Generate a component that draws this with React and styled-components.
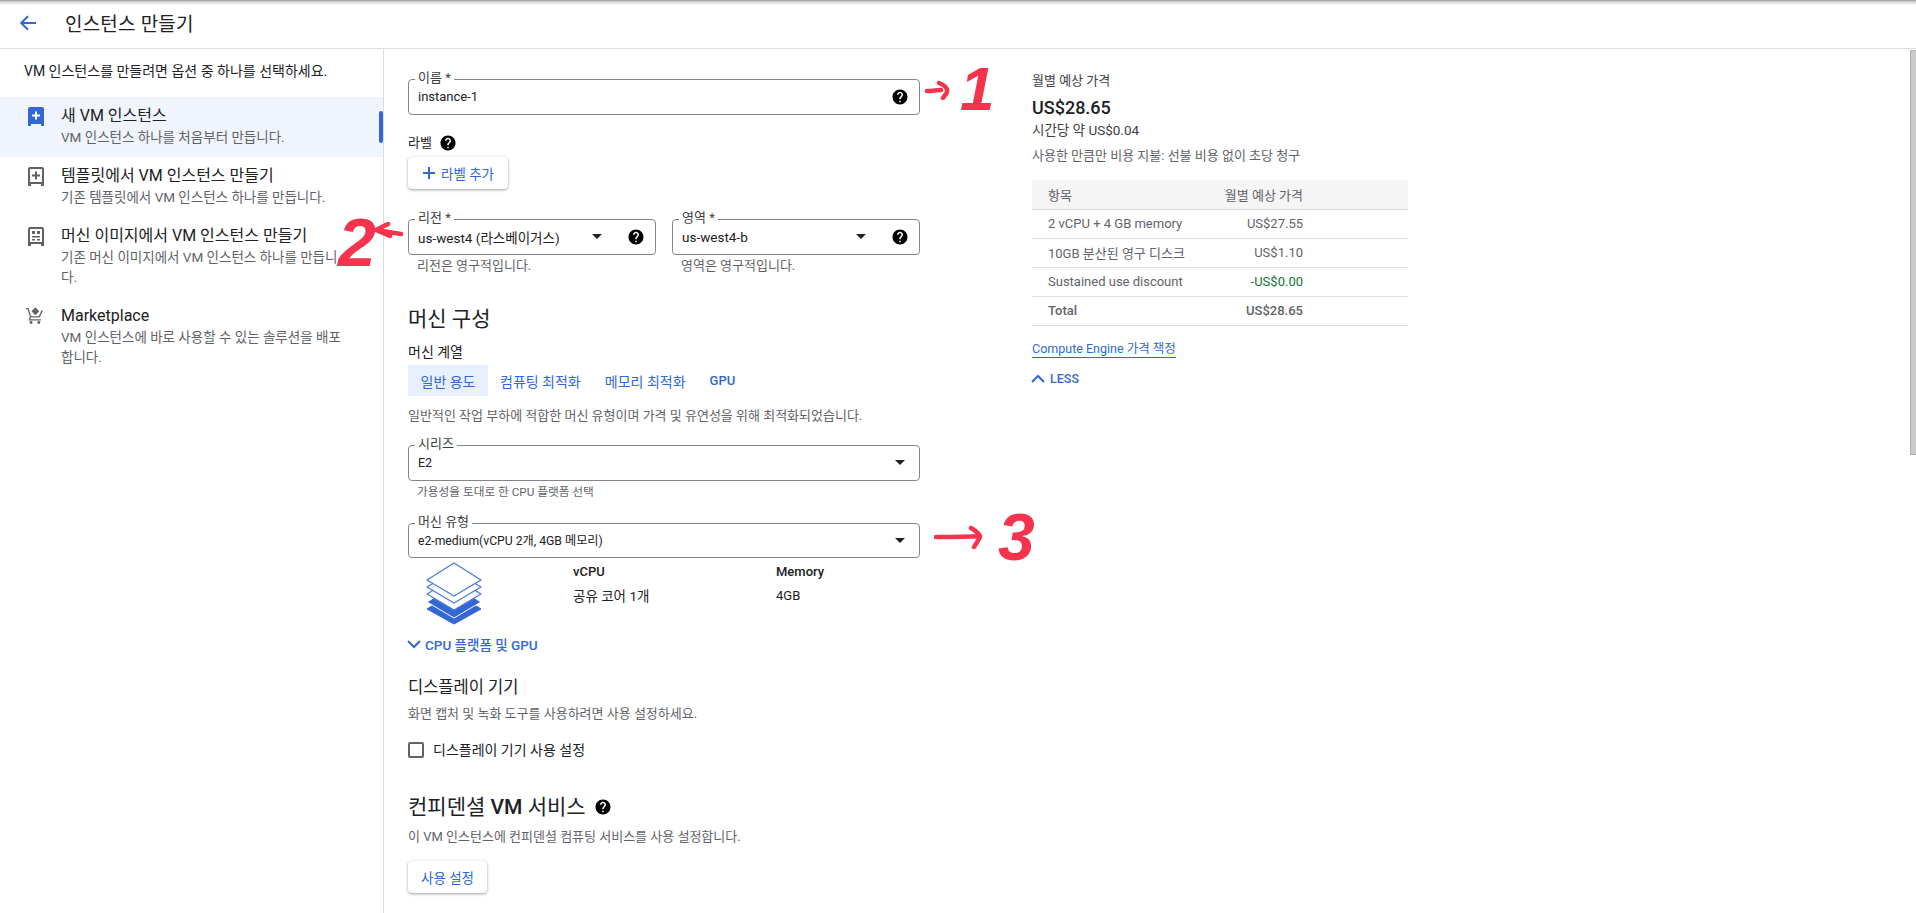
import React from 'react';
import styled, { createGlobalStyle } from 'styled-components';

const FONT = `Roboto, "Noto Sans CJK KR", "Noto Sans", sans-serif`;

const Global = createGlobalStyle`
  html, body { margin: 0; padding: 0; height: 100%; background: #fff; overflow: hidden; }
  body { font-family: ${FONT}; color: #202124; }
  * { box-sizing: border-box; }
`;

const Page = styled.div`
  position: relative;
  width: 1916px;
  height: 913px;
  overflow: hidden;
  display: flex;
  flex-direction: column;
`;
const Header = styled.header`
  height: 49px;
  flex: none;
  display: flex;
  align-items: center;
  padding: 0 0 3px 19px;
  gap: 28px;
  border-bottom: 1px solid #dadce0;
  background: linear-gradient(#9a9a9a 0, #d8d8d8 2px, #fff 5px);
`;
const Title = styled.h1`
  margin: 0;
  font-size: 19px;
  font-weight: 400;
  letter-spacing: 0.2px;
  color: #202124;
`;
const Body = styled.div`
  flex: 1;
  display: flex;
  min-height: 0;
`;
const Sidebar = styled.nav`
  width: 384px;
  flex: none;
  border-right: 1px solid #dadce0;
`;
const SideIntro = styled.p`
  margin: 0;
  height: 48px;
  padding: 12px 0 0 24px;
  font-size: 14px;
  line-height: 20px;
  color: #202124;
`;
const SideItem = styled.div`
  position: relative;
  display: flex;
  padding: 8px 30px 10px 28px;
  gap: 17px;
  background: ${p => (p.$active ? '#f0f4fc' : 'transparent')};
  &::after {
    content: '';
    display: ${p => (p.$active ? 'block' : 'none')};
    position: absolute;
    right: 0;
    top: 14px;
    width: 4px;
    height: 32px;
    border-radius: 2px;
    background: #3367d6;
  }
`;
const SideIcon = styled.span`
  flex: none;
  width: 16px;
  height: 20px;
  margin-top: 2px;
  display: flex;
  justify-content: center;
`;
const SideText = styled.div`
  flex: 1;
  min-width: 0;
`;
const SideTitle = styled.div`
  font-size: 16px;
  line-height: 22px;
  color: #202124;
`;
const SideDesc = styled.div`
  font-size: 13.5px;
  line-height: 20px;
  color: #5f6368;
  word-break: break-all;
`;
const Main = styled.main`
  flex: 1;
  display: flex;
  padding: 30px 0 0 24px;
  gap: 112px;
`;
const Form = styled.div`
  width: 512px;
  flex: none;
`;
const Field = styled.div`
  position: relative;
  flex: 1;
  height: ${p => p.$h || 36}px;
  margin-top: ${p => p.$top || 0}px;
  display: flex;
  align-items: center;
  padding: 0 10px 1px 9px;
  border: 1px solid #80868b;
  border-radius: 4px;
  font-size: ${p => p.$size || 13}px;
  color: #202124;
`;
const FieldLabel = styled.span`
  position: absolute;
  left: 6px;
  top: -10px;
  padding: 0 3px;
  background: #fff;
  font-size: 13px;
  line-height: 16px;
  color: #3c4043;
`;
const FieldValue = styled.span`
  flex: 1;
  white-space: nowrap;
`;
const Arrow = styled.span`
  width: 0;
  height: 0;
  margin-right: ${p => p.$gap || 0}px;
  border-left: 5px solid transparent;
  border-right: 5px solid transparent;
  border-top: 5px solid #202124;
`;
const Caret = styled(Arrow)`
  margin-right: ${p => p.$gap || 4}px;
`;
const Hint = styled.div`
  padding-left: 9px;
  margin-top: ${p => p.$top || 3}px;
  font-size: ${p => p.$size || 13}px;
  line-height: 16px;
  color: #5f6368;
`;
const LabelRow = styled.div`
  margin-top: 19px;
  display: flex;
  align-items: center;
  gap: 7px;
  font-size: 13px;
  line-height: 16px;
  color: #202124;
`;
const RaisedButton = styled.button`
  display: flex;
  align-items: center;
  justify-content: center;
  gap: 5px;
  width: ${p => p.$w}px;
  height: 32px;
  margin-top: ${p => p.$top}px;
  padding: 0;
  border: 0;
  border-radius: 4px;
  background: #fff;
  color: #3367d6;
  font-family: ${FONT};
  font-size: 13.5px;
  box-shadow: 0 1px 2px rgba(60,64,67,.3), 0 1px 3px 1px rgba(60,64,67,.15);
`;
const Row = styled.div`
  display: flex;
  gap: 16px;
  margin-top: ${p => p.$top || 0}px;
`;
const RowCol = styled.div`
  flex: 1;
  min-width: 0;
`;
const H2 = styled.h2`
  display: flex;
  align-items: center;
  gap: 8px;
  margin: ${p => p.$top || 0}px 0 0;
  font-size: 21px;
  line-height: 24px;
  font-weight: 400;
  color: #202124;
`;
const H2Latin = styled.b`
  font-weight: 500;
`;
const H3 = styled.h3`
  margin: ${p => p.$top || 0}px 0 0;
  font-size: 16.5px;
  line-height: 20px;
  font-weight: 400;
  color: #202124;
`;
const Sub = styled.div`
  margin-top: ${p => p.$top || 0}px;
  font-size: ${p => (p.$dark ? 14 : 13)}px;
  line-height: 16px;
  color: ${p => (p.$dark ? '#202124' : '#5f6368')};
`;
const Tabs = styled.div`
  display: flex;
  margin-top: 5px;
  height: 31px;
`;
const Tab = styled.div`
  display: flex;
  align-items: center;
  padding: 0 ${p => (p.$active ? 12.500 : 12)}px;
  font-size: ${p => (p.$bold ? 13 : 14)}px;
  font-weight: ${p => (p.$bold ? 500 : 400)};
  color: #3367d6;
  background: ${p => (p.$active ? '#e8f0fe' : 'transparent')};
`;
const Spec = styled.div`
  display: flex;
  margin-top: 4px;
  height: 66px;
`;
const StackBox = styled.div`
  width: 165px;
  padding-left: 16px;
  flex: none;
`;
const SpecCol = styled.div`
  width: ${p => p.$w}px;
  padding-top: 2px;
  font-size: 13px;
`;
const SpecHead = styled.div`
  font-weight: 500;
  line-height: 16px;
  margin-bottom: 8px;
`;
const SpecVal = styled.div`
  line-height: 16px;
  font-size: ${p => p.$size || 13}px;
`;
const Disclosure = styled.div`
  display: flex;
  align-items: center;
  gap: ${p => p.$gap || 4}px;
  height: ${p => p.$h || 20}px;
  margin-top: ${p => p.$top || 0}px;
  margin-left: ${p => p.$left || 0}px;
  font-size: ${p => p.$size || 12.500}px;
  font-weight: 500;
  color: #3367d6;
`;
const CheckRow = styled.label`
  display: flex;
  align-items: center;
  gap: 9px;
  margin-top: 20px;
  font-size: 14px;
  line-height: 16px;
`;
const Box = styled.span`
  width: 16px;
  height: 16px;
  border: 2px solid #5f6368;
  border-radius: 2px;
`;
const Price = styled.aside`
  width: 376px;
  flex: none;
  margin-top: -6px;
`;
const PriceCaption = styled.div`
  font-size: 13px;
  line-height: 16px;
  color: #3c4043;
`;
const PriceBig = styled.div`
  margin-top: 8px;
  font-size: 18px;
  line-height: 22px;
  font-weight: 500;
`;
const PriceHour = styled.div`
  font-size: 13.500px;
  line-height: 16px;
  color: #3c4043;
  margin-top: 3px;
`;
const PriceNote = styled.div`
  margin-top: 10px;
  font-size: 13px;
  line-height: 16px;
  color: #5f6368;
`;
const Table = styled.table`
  width: 100%;
  margin-top: 16px;
  border-collapse: collapse;
  font-size: 13px;
  color: #5f6368;
`;
const Th = styled.th`
  height: 29px;
  font-weight: 400;
  background: #f5f5f5;
  border-bottom: 1px solid #dadce0;
  text-align: ${p => (p.$num ? 'right' : 'left')};
  padding: ${p => (p.$num ? '0 105px 0 0' : '0 0 0 16px')};
`;
const Td = styled.td`
  height: 29px;
  border-bottom: 1px solid #dadce0;
  font-weight: ${p => (p.$bold ? 500 : 400)};
  color: ${p => p.$color || 'inherit'};
  text-align: ${p => (p.$num ? 'right' : 'left')};
  padding: ${p => (p.$num ? '0 105px 0 0' : '0 0 0 16px')};
`;
const PriceLink = styled.a`
  display: inline-block;
  margin-top: 15px;
  font-size: 12.500px;
  line-height: 16px;
  color: #3367d6;
  border-bottom: 1px solid #3367d6;
`;
const Scroll = styled.div`
  position: absolute;
  top: 50px;
  right: 0;
  width: 6px;
  height: 405px;
  background: #cbcbcb;
  border-left: 1px solid #adadad;
  border-top: 1px solid #b8b8b8;
  border-bottom: 1px solid #adadad;
`;
const Note = styled.div`
  position: absolute;
  left: ${p => p.$x}px;
  top: ${p => p.$y}px;
  pointer-events: none;
`;
const NoteDigit = styled(Note)`
  font-family: "Liberation Sans", sans-serif;
  font-size: ${p => p.$size}px;
  line-height: 1;
  font-style: italic;
  font-weight: 700;
  color: #f5334d;
`;

const HelpIcon = ({ size = 18 }) => (
  <svg width={size} height={size} viewBox="0 0 24 24" fill="#000" style={{ flex: 'none' }}>
    <path d="M12 2C6.48 2 2 6.48 2 12s4.48 10 10 10 10-4.48 10-10S17.52 2 12 2zm1 17h-2v-2h2v2zm2.07-7.75l-.9.92C13.45 12.9 13 13.5 13 15h-2v-.5c0-1.1.45-2.1 1.17-2.83l1.24-1.26c.37-.36.59-.86.59-1.41 0-1.1-.9-2-2-2s-2 .9-2 2H8c0-2.21 1.79-4 4-4s4 1.79 4 4c0 .88-.36 1.68-.93 2.25z" />
  </svg>
);
const BackIcon = () => (
  <svg width="18" height="18" viewBox="0 0 18 18" fill="none" stroke="#3367d6" strokeWidth="2">
    <path d="M17 9H2.5M9 2.2 2.2 9 9 15.8" />
  </svg>
);
const Plus = () => (
  <svg width="14" height="14" viewBox="0 0 14 14" fill="none" stroke="#3367d6" strokeWidth="2">
    <path d="M7 1v12M1 7h12" />
  </svg>
);
const Chevron = ({ up }) => (
  <svg width="16" height="10" viewBox="0 0 16 10" fill="none" stroke="#3367d6" strokeWidth="2">
    <path d={up ? 'M2 8l6-6 6 6' : 'M2 2l6 6 6-6'} />
  </svg>
);
const NewVm = () => (
  <svg width="16" height="19" viewBox="0 0 16 19">
    <path fill="#3367d6" d="M2 0h12a2 2 0 0 1 2 2v17h-3v-2H3v2H0V2a2 2 0 0 1 2-2z" />
    <path stroke="#fff" strokeWidth="2" d="M8 4.5v8M4 8.5h8" />
  </svg>
);
const TemplateVm = () => (
  <svg width="16" height="19" viewBox="0 0 16 19" fill="none">
    <path fill="#5f6368" fillRule="evenodd" d="M2 0h12a2 2 0 0 1 2 2v17h-3v-2H3v2H0V2a2 2 0 0 1 2-2zm0 2v13h12V2z" />
    <path stroke="#5f6368" strokeWidth="2" d="M8 4.5v8M4 8.5h8" />
  </svg>
);
const ImageVm = () => (
  <svg width="16" height="19" viewBox="0 0 16 19" fill="none">
    <path fill="#5f6368" fillRule="evenodd" d="M2 0h12a2 2 0 0 1 2 2v17h-3v-2H3v2H0V2a2 2 0 0 1 2-2zm0 2v13h12V2z" />
    <path fill="#5f6368" d="M4 4h3v3H4zM9 4h3v3H9zM4 9h8v1.500H4zM4 12h3v1.500H4zM9 12h3v1.500H9z" />
  </svg>
);
const Cart = () => (
  <svg width="22" height="22" viewBox="0 0 22 22" fill="none" style={{ marginLeft: -3, marginTop: -2 }}>
    <path stroke="#5f6368" strokeWidth="1.500" d="M1 2.500h2.500l3 9.500h10L20 4.500M6.500 12 5 15.500h13.500" />
    <path fill="#5f6368" d="M12 1l4.500 4.500L12 10 7.500 5.500z" />
    <circle cx="7" cy="18.500" r="1.700" fill="#5f6368" />
    <circle cx="16" cy="18.500" r="1.700" fill="#5f6368" />
  </svg>
);
const Stack = () => (
  <svg width="60" height="64" viewBox="0 0 58 64" fill="none" strokeLinejoin="round">
    <path fill="#3367d6" stroke="#3367d6" d="M29 30 56 47 29 62 2 47z" />
    <path fill="#3367d6" stroke="#fff" d="M29 23 56 40 29 56 2 40z" />
    <path fill="#fff" stroke="#4a7ae0" strokeWidth="1.300" d="M29 16 56 32 29 48 2 32z" />
    <path fill="#fff" stroke="#4a7ae0" strokeWidth="1.300" d="M29 9 56 25 29 41 2 25z" />
    <path fill="#fff" stroke="#4a7ae0" strokeWidth="1.300" d="M29 1 56 18 29 34 2 18z" />
  </svg>
);

const Scribble = ({ w, h, d }) => (
  <svg width={w} height={h} viewBox={`0 0 ${w} ${h}`} fill="none" stroke="#f5334d" strokeWidth="4.500" strokeLinecap="round" strokeLinejoin="round">
    <path d={d} />
  </svg>
);

export default function App() {
  return (
    <Page>
      <Global />
      <Header>
        <BackIcon />
        <Title>인스턴스 만들기</Title>
      </Header>
      <Body>
        <Sidebar>
          <SideIntro>VM 인스턴스를 만들려면 옵션 중 하나를 선택하세요.</SideIntro>
          <SideItem $active>
            <SideIcon><NewVm /></SideIcon>
            <SideText>
              <SideTitle>새 VM 인스턴스</SideTitle>
              <SideDesc>VM 인스턴스 하나를 처음부터 만듭니다.</SideDesc>
            </SideText>
          </SideItem>
          <SideItem>
            <SideIcon><TemplateVm /></SideIcon>
            <SideText>
              <SideTitle>템플릿에서 VM 인스턴스 만들기</SideTitle>
              <SideDesc>기존 템플릿에서 VM 인스턴스 하나를 만듭니다.</SideDesc>
            </SideText>
          </SideItem>
          <SideItem>
            <SideIcon><ImageVm /></SideIcon>
            <SideText>
              <SideTitle>머신 이미지에서 VM 인스턴스 만들기</SideTitle>
              <SideDesc>기존 머신 이미지에서 VM 인스턴스 하나를 만듭니다.</SideDesc>
            </SideText>
          </SideItem>
          <SideItem>
            <SideIcon><Cart /></SideIcon>
            <SideText>
              <SideTitle>Marketplace</SideTitle>
              <SideDesc>VM 인스턴스에 바로 사용할 수 있는 솔루션을 배포합니다.</SideDesc>
            </SideText>
          </SideItem>
        </Sidebar>
        <Main>
          <Form>
            <Field>
              <FieldLabel>이름 *</FieldLabel>
              <FieldValue>instance-1</FieldValue>
              <HelpIcon />
            </Field>
            <LabelRow>라벨 <HelpIcon /></LabelRow>
            <RaisedButton $w={100} $top={5}><Plus />라벨 추가</RaisedButton>
            <Row $top={30}>
              <RowCol>
                <Field $size={13.500}>
                  <FieldLabel>리전 *</FieldLabel>
                  <FieldValue>us-west4 (라스베이거스)</FieldValue>
                  <Arrow $gap={25} />
                  <HelpIcon />
                </Field>
                <Hint>리전은 영구적입니다.</Hint>
              </RowCol>
              <RowCol>
                <Field $size={13.500}>
                  <FieldLabel>영역 *</FieldLabel>
                  <FieldValue>us-west4-b</FieldValue>
                  <Arrow $gap={25} />
                  <HelpIcon />
                </Field>
                <Hint>영역은 영구적입니다.</Hint>
              </RowCol>
            </Row>
            <H2 $top={33}>머신 구성</H2>
            <Sub $dark $top={13}>머신 계열</Sub>
            <Tabs>
              <Tab $active>일반 용도</Tab>
              <Tab>컴퓨팅 최적화</Tab>
              <Tab>메모리 최적화</Tab>
              <Tab $bold>GPU</Tab>
            </Tabs>
            <Sub $top={12}>일반적인 작업 부하에 적합한 머신 유형이며 가격 및 유연성을 위해 최적화되었습니다.</Sub>
            <Field $top={21} $size={12.500}>
              <FieldLabel>시리즈</FieldLabel>
              <FieldValue>E2</FieldValue>
              <Caret />
            </Field>
            <Hint $size={11.700}>가용성을 토대로 한 CPU 플랫폼 선택</Hint>
            <Field $top={23} $h={35} $size={12.200}>
              <FieldLabel>머신 유형</FieldLabel>
              <FieldValue>e2-medium(vCPU 2개, 4GB 메모리)</FieldValue>
              <Caret />
            </Field>
            <Spec>
              <StackBox><Stack /></StackBox>
              <SpecCol $w={203}>
                <SpecHead>vCPU</SpecHead>
                <SpecVal $size={13.500}>공유 코어 1개</SpecVal>
              </SpecCol>
              <SpecCol $w={100}>
                <SpecHead>Memory</SpecHead>
                <SpecVal>4GB</SpecVal>
              </SpecCol>
            </Spec>
            <Disclosure $top={6} $left={-2} $gap={3} $size={13.500}><Chevron />CPU 플랫폼 및 GPU</Disclosure>
            <H3 $top={24}>디스플레이 기기</H3>
            <Sub $top={8}>화면 캡처 및 녹화 도구를 사용하려면 사용 설정하세요.</Sub>
            <CheckRow><Box />디스플레이 기기 사용 설정</CheckRow>
            <H2 $top={37}><span>컨피덴셜 <H2Latin>VM</H2Latin> 서비스</span> <HelpIcon /></H2>
            <Sub $top={10}>이 VM 인스턴스에 컨피덴셜 컴퓨팅 서비스를 사용 설정합니다.</Sub>
            <RaisedButton $w={79} $top={16}>사용 설정</RaisedButton>
          </Form>
          <Price>
            <PriceCaption>월별 예상 가격</PriceCaption>
            <PriceBig>US$28.65</PriceBig>
            <PriceHour>시간당 약 US$0.04</PriceHour>
            <PriceNote>사용한 만큼만 비용 지불: 선불 비용 없이 초당 청구</PriceNote>
            <Table>
              <thead>
                <tr><Th>항목</Th><Th $num>월별 예상 가격</Th></tr>
              </thead>
              <tbody>
                <tr><Td>2 vCPU + 4 GB memory</Td><Td $num>US$27.55</Td></tr>
                <tr><Td>10GB 분산된 영구 디스크</Td><Td $num>US$1.10</Td></tr>
                <tr><Td>Sustained use discount</Td><Td $num $color="#137333">-US$0.00</Td></tr>
                <tr><Td $bold>Total</Td><Td $num $bold>US$28.65</Td></tr>
              </tbody>
            </Table>
            <PriceLink>Compute Engine 가격 책정</PriceLink>
            <Disclosure $h={16} $top={13} $left={-2}><Chevron up />LESS</Disclosure>
          </Price>
        </Main>
      </Body>
      <Scroll />
      <Note $x={925} $y={80}><Scribble w={30} h={20} d="M2 11c5 0 10-1 14-1M14 3c5 2 9 5 8 9-1 3-3 4-4 6" /></Note>
      <NoteDigit $x={960} $y={58} $size={62}>1</NoteDigit>
      <Note $x={373} $y={222}><Scribble w={30} h={20} d="M28 12c-7-1-15-3-20-3M15 2 3 8l14 6" /></Note>
      <NoteDigit $x={338} $y={208} $size={68}>2</NoteDigit>
      <Note $x={934} $y={525}><Scribble w={52} h={26} d="M2 12c14 0 30 0 44-1M37 3c5 3 9 6 9 9-2 4-4 7-6 10" /></Note>
      <NoteDigit $x={998} $y={504} $size={66}>3</NoteDigit>
    </Page>
  );
}
